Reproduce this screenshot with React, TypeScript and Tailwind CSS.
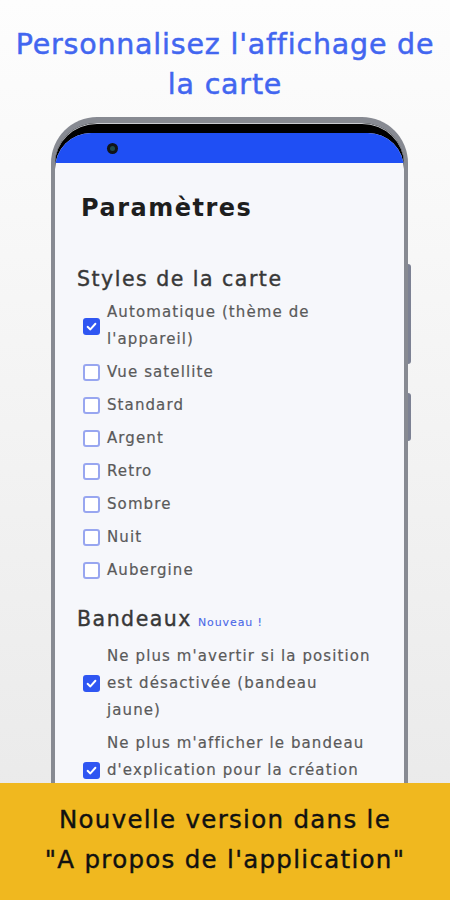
import React from 'react';

const FONT = { fontFamily: '"DejaVu Sans", Inter, sans-serif' };

const Box = ({ checked }: { checked?: boolean }) =>
  checked ? (
    <span className="w-[17px] h-[17px] rounded-[3px] bg-[#2f56f2] flex items-center justify-center shrink-0">
      <svg viewBox="0 0 16 16" className="w-[13px] h-[13px]" fill="none" stroke="white" strokeWidth="2.4" strokeLinecap="round" strokeLinejoin="round">
        <polyline points="3.2,8.4 6.6,11.6 12.8,4.6" />
      </svg>
    </span>
  ) : (
    <span className="w-[17px] h-[17px] rounded-[3px] border-[2px] border-[#98a6f0] bg-white shrink-0" />
  );

// a line given as '' keeps its height but shows nothing (hidden under the banner)
const Option = ({ lines, checked }: { lines: string[]; checked?: boolean }) => (
  <div className="flex items-center gap-[7px] pl-[6px]">
    <Box checked={checked} />
    <p className="text-[15px] leading-[27px] text-[#5a5a5a] tracking-[1.1px] [-webkit-text-stroke:0.2px]">
      {lines.map((l, i) => (
        <span key={i} className="block h-[27px] whitespace-nowrap">{l}</span>
      ))}
    </p>
  </div>
);

const styles = ['Vue satellite', 'Standard', 'Argent', 'Retro', 'Sombre', 'Nuit', 'Aubergine'];

export default function App() {
  return (
    <div style={FONT} className="w-[450px] h-[900px] flex flex-col overflow-hidden bg-linear-to-b from-[#fdfdfd] to-[#e8e8e8]">
      {/* Title */}
      <h1 className="pt-[25px] text-center text-[28.5px] leading-[40px] text-[#4266f0] tracking-[0.8px] [-webkit-text-stroke:0.5px]">
        Personnalisez l'affichage de
        <br />
        la carte
      </h1>

      {/* Phone */}
      <div className="flex-1 min-h-0 overflow-hidden pt-[12px]">
        <div className="relative ml-[51px] w-[357px] h-[760px] rounded-t-[46px] border-[4px] border-t-[6px] border-b-0 border-[#878a92] bg-black pt-[10px] shadow-[inset_0_1px_0_#c9cbd0]">
          <span className="absolute -right-[7px] top-[141px] w-[3px] h-[100px] rounded-r bg-[#7c8193]" />
          <span className="absolute -right-[7px] top-[270px] w-[3px] h-[48px] rounded-r bg-[#7c8193]" />
          <div className="h-full rounded-t-[36px] overflow-hidden bg-[#f6f7fb]">
            <div className="h-[30px] bg-[#1f4ff4] flex items-center pl-[52px]">
              <span className="w-[11px] h-[11px] rounded-full bg-[#101418] flex items-center justify-center">
                <span className="w-[5px] h-[5px] rounded-full bg-[#1f4a4a]" />
              </span>
            </div>

            <div className="pl-[22px]">
              <h2 className="mt-[29px] ml-[4px] text-[24px] leading-[32px] font-bold text-[#1e1e1e] tracking-[1.5px]">Paramètres</h2>

              <h3 className="mt-[41px] text-[20.5px] leading-[28px] text-[#383838] tracking-[1.5px] [-webkit-text-stroke:0.4px]">Styles de la carte</h3>
              <div className="mt-[6px] flex flex-col gap-[6px]">
                <Option checked lines={['Automatique (thème de', "l'appareil)"]} />
                {styles.map((s) => (
                  <Option key={s} lines={[s]} />
                ))}
              </div>

              <h3 className="mt-[21px] text-[20.5px] leading-[28px] text-[#383838] tracking-[1.5px] [-webkit-text-stroke:0.4px]">
                Bandeaux <span className="ml-[-2px] text-[11px] text-[#4a68e8] tracking-[0.9px] [-webkit-text-stroke:0.1px]">Nouveau !</span>
              </h3>
              <div className="mt-[6px] flex flex-col gap-[6px]">
                <Option checked lines={["Ne plus m'avertir si la position", 'est désactivée (bandeau', 'jaune)']} />
                <Option checked lines={["Ne plus m'afficher le bandeau", "d'explication pour la création", '']} />
              </div>
            </div>
          </div>
        </div>
      </div>

      {/* Banner */}
      <div className="h-[117px] shrink-0 bg-[#f0b81f] pt-[17px] text-center text-[24.5px] leading-[40px] text-[#111] tracking-[1.3px] [-webkit-text-stroke:0.4px]">
        Nouvelle version dans le
        <br />
        "A propos de l'application"
      </div>
    </div>
  );
}
